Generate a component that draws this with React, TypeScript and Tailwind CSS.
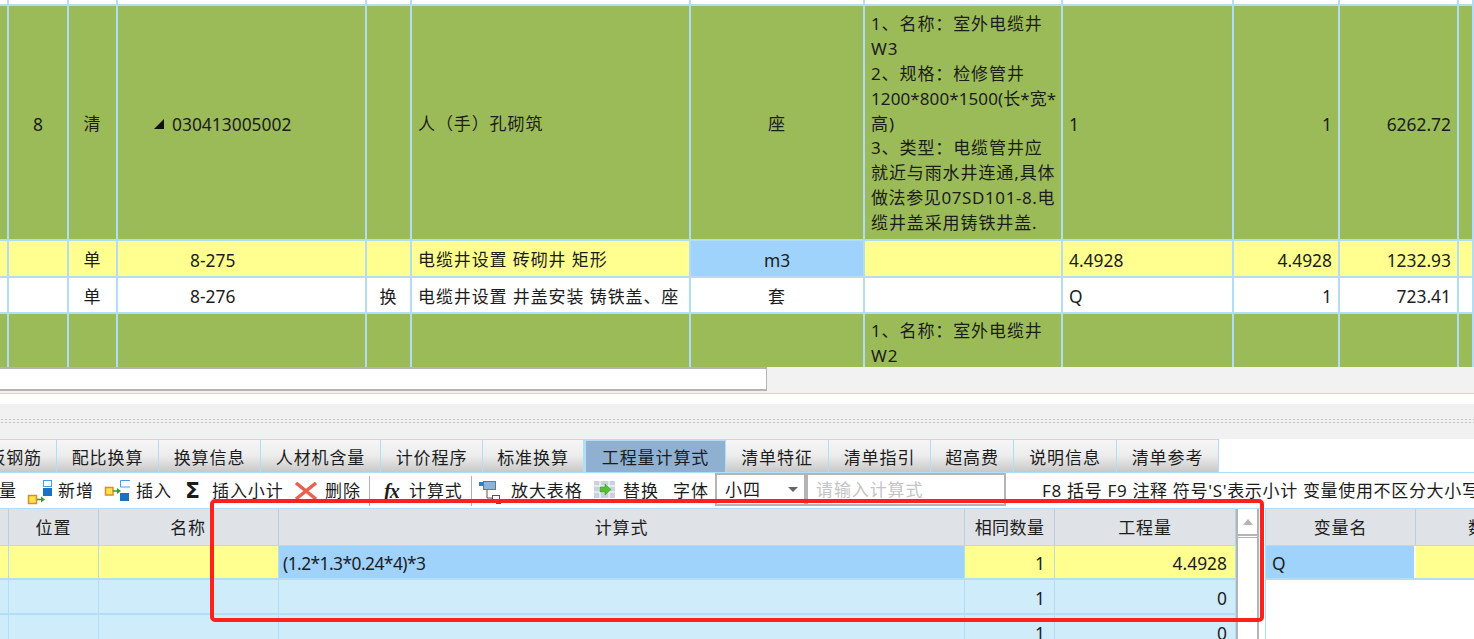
import type { ReactNode } from 'react'

const FONT = 'font-["Noto_Sans","Noto_Sans_CJK_SC",sans-serif]'

const cols = 'grid grid-cols-[9px_60px_49px_249px_45px_279px_174px_198px_171px_106px_119px_15px]'
const NUM = 'text-[17.4px] tracking-normal'

const aligns = [
  'justify-center', 'justify-center', 'justify-center', 'justify-start', 'justify-center', 'justify-start',
  'justify-center', 'justify-start', 'justify-start', 'justify-end', 'justify-end', 'justify-start',
]

type RowProps = { bg: string; h: string; cells: ReactNode[]; hilite?: number }

function Row({ bg, h, cells, hilite }: RowProps) {
  return (
    <div className={`${cols} ${bg} ${h} border-b-2 border-[#b5dcf5]`}>
      {cells.map((c, i) => (
        <div
          key={i}
          className={`flex items-center border-r-2 border-[#b5dcf5] min-w-0 pt-[3px] ${i === 0 ? '' : 'px-1.5'} ${aligns[i]} ${i === hilite ? 'bg-[#9fd3fb]' : ''}`}
        >
          {c}
        </div>
      ))}
    </div>
  )
}

const tabs = [
  { label: '钢筋', w: 'w-[57px]', left: true },
  { label: '配比换算', w: 'w-[102px]' },
  { label: '换算信息', w: 'w-[102px]' },
  { label: '人材机含量', w: 'w-[120px]' },
  { label: '计价程序', w: 'w-[102px]' },
  { label: '标准换算', w: 'w-[101px]' },
  { label: '工程量计算式', w: 'w-[142px]', active: true },
  { label: '清单特征', w: 'w-[103px]' },
  { label: '清单指引', w: 'w-[102px]' },
  { label: '超高费', w: 'w-[83px]' },
  { label: '说明信息', w: 'w-[103px]' },
  { label: '清单参考', w: 'w-[102px]' },
]

function NewIcon() {
  return (
    <svg width="26" height="30" viewBox="0 0 26 30">
      <rect x="2.500" y="19.500" width="8" height="8" fill="#fbe44a" stroke="#e08a2b" strokeWidth="1.500" />
      <path d="M11 23.500h6" stroke="#2f9e2f" strokeWidth="1.500" />
      <path d="M15 20.500l4 3-4 3z" fill="#2f9e2f" />
      <rect x="17.500" y="4.500" width="8" height="6" fill="#fff" stroke="#4a9be0" />
      <rect x="17" y="12" width="9" height="8" fill="#1b6fc4" />
    </svg>
  )
}

function InsertIcon() {
  return (
    <svg width="26" height="30" viewBox="0 0 26 30">
      <rect x="1.500" y="11.500" width="7.500" height="7.500" fill="#fbe44a" stroke="#e08a2b" strokeWidth="1.500" />
      <path d="M9 15h6" stroke="#2f9e2f" strokeWidth="1.500" />
      <path d="M13 12l4 3-4 3z" fill="#2f9e2f" />
      <path d="M26 4.500h-9.500v6.500h9.500" fill="#fff" stroke="#4a9be0" />
      <rect x="16" y="17" width="9" height="8" fill="#1b6fc4" />
    </svg>
  )
}

function CrossIcon() {
  return (
    <svg width="25" height="18" viewBox="0 0 25 18">
      <path d="M2 1l20 16M22 1L2 17" stroke="#e8624f" strokeWidth="3.500" />
    </svg>
  )
}

function ZoomTableIcon() {
  return (
    <svg width="33" height="30" viewBox="0 0 33 30">
      <rect x="7" y="6" width="5" height="4" fill="#2f7fc4" />
      <rect x="11.500" y="5.500" width="12" height="8" fill="#8db4d8" stroke="#4f7fa8" />
      <path d="M15 14v8h5" fill="none" stroke="#555" />
      <rect x="20.500" y="19.500" width="7" height="7" fill="#fff" stroke="#555" />
      <path d="M24 27.500h5" stroke="#555" />
    </svg>
  )
}

function ReplaceIcon() {
  return (
    <svg width="24" height="30" viewBox="0 0 24 30">
      <rect x="1" y="5" width="21" height="17" fill="#c9d3de" />
      <path d="M7 5v17M16 5v17M1 10h21M1 16h21" stroke="#fff" />
      <path d="M7 11h5V8l6 5.500-6 5.500v-3H7z" fill="#55c032" stroke="#2f8f1f" strokeWidth="0.500" />
    </svg>
  )
}

function Tool({ icon, box, label, w }: { icon: ReactNode; box: string; label: string; w: string }) {
  return (
    <div className={`flex items-center h-full shrink-0 ${w}`}>
      <span className={`flex items-center shrink-0 ${box}`}>{icon}</span>
      <span className="ml-1.5 pt-px whitespace-nowrap">{label}</span>
    </div>
  )
}

const tableCols = 'grid grid-cols-[9px_90px_180px_686px_90px_181px]'

export default function App() {
  return (
    <div className={`${FONT} relative w-[1474px] h-[639px] overflow-hidden bg-white text-[17px] tracking-[0.9px] text-[#1c1c1c]`}>
      {/* upper grid */}
      <div className={`${cols} h-[6px] border-b-2 border-[#b5dcf5]`}>
        {aligns.map((_, i) => (
          <div key={i} className="border-r-2 border-[#b5dcf5]" />
        ))}
      </div>
      <Row
        bg="bg-[#9bbb59]"
        h="h-[235px]"
        cells={[
          '', <span className={NUM}>8</span>, '清',
          <span className={`flex items-center ml-[30px] ${NUM}`}>
            <span className="w-0 h-0 mr-[8px] border-l-[10px] border-l-transparent border-b-[10px] border-b-[#111]" />
            030413005002
          </span>,
          '', '人（手）孔砌筑', '座',
          <div className="leading-[24.9px] -mr-1 whitespace-nowrap">
            1、名称：室外电缆井
            <br />W3
            <br />2、规格：检修管井
            <br /><span className="tracking-[0.1px]">1200*800*1500(长*宽*</span>
            <br />高)
            <br />3、类型：电缆管井应
            <br />就近与雨水井连通,具体
            <br /><span className="tracking-[0.6px]">做法参见07SD101-8.电</span>
            <br />缆井盖采用铸铁井盖.
          </div>,
          <span className={NUM}>1</span>, <span className={NUM}>1</span>, <span className={NUM}>6262.72</span>, '',
        ]}
      />
      <Row
        bg="bg-[#ffff8f]"
        h="h-[37px]"
        hilite={6}
        cells={[
          '', '', '单', <span className={`ml-[66px] ${NUM}`}>8-275</span>, '', '电缆井设置 砖砌井 矩形',
          <span className={NUM}>m3</span>, '', <span className={NUM}>4.4928</span>, <span className={NUM}>4.4928</span>, <span className={NUM}>1232.93</span>, '',
        ]}
      />
      <Row
        bg="bg-white"
        h="h-[36px]"
        cells={[
          '', '', '单', <span className={`ml-[66px] ${NUM}`}>8-276</span>, '换', '电缆井设置 井盖安装 铸铁盖、座', '套', '',
          <span className={NUM}>Q</span>, <span className={NUM}>1</span>, <span className={NUM}>723.41</span>, '',
        ]}
      />
      <div className={`${cols} bg-[#9bbb59] h-[53px] overflow-hidden`}>
        {aligns.map((a, i) => (
          <div key={i} className={`flex ${a} border-r-2 border-[#b5dcf5] min-w-0 ${i === 0 ? '' : 'px-1.5'}`}>
            {i === 7 && <div className="leading-[24.9px] -mr-1 pt-[5px]">1、名称：室外电缆井W2</div>}
          </div>
        ))}
      </div>

      {/* horizontal scrollbar */}
      <div className="h-[26px] bg-[#f2f2f2]">
        <div className="w-[767px] h-[24px] bg-white border-y-2 border-r border-[#b4b4b4]" />
      </div>
      <div className="h-px bg-[#b5dcf5]" />
      <div className="h-[10px] bg-white" />

      {/* splitter */}
      <div className="h-[35px] bg-[#f1f1f1] flex items-center">
        <div className="w-full h-[7px] bg-[radial-gradient(#c4c4c4_1px,transparent_1.2px)] bg-[length:4px_3px]" />
      </div>

      {/* tabs */}
      <div className="flex h-[34px] border-b border-[#b5dcf5] bg-white">
        {tabs.map((t) => (
          <div
            key={t.label}
            className={`${t.w} shrink-0 flex items-center justify-center pt-[3px] whitespace-nowrap overflow-hidden border-r border-t border-[#b5dcf5] ${
              t.active
                ? 'bg-[#8fb0d0] border-l-2 border-t-2'
                : 'bg-linear-to-b from-[#f6f6f6] via-[#ececec] to-[#c8c8c8]'
            } ${t.left ? 'justify-end! pr-[14px]' : ''}`}
          >
            {t.left ? '板钢筋' : t.label}
          </div>
        ))}
      </div>

      {/* toolbar */}
      <div className="flex items-center h-[36px] border-b border-[#b5dcf5] whitespace-nowrap overflow-hidden">
        <span className="w-[26px] shrink-0 -indent-px pt-px">量</span>
        <Tool icon={<NewIcon />} box="w-[26px]" label="新增" w="w-[78px]" />
        <Tool icon={<InsertIcon />} box="w-[26px]" label="插入" w="w-[80px]" />
        <Tool
          icon={<span className="font-['DejaVu_Sans'] font-bold text-[22px] ml-[1px] leading-none">Σ</span>}
          box="w-[22px]"
          label="插入小计"
          w="w-[110px]"
        />
        <Tool icon={<CrossIcon />} box="w-[25px]" label="删除" w="w-[75px]" />
        <div className="w-px h-[30px] bg-[#b0b0b0] shrink-0" />
        <Tool
          icon={<span className="font-['Liberation_Serif'] italic font-bold text-[20px] ml-[14px] leading-none tracking-[-1px]">fx</span>}
          box="w-[33px]"
          label="计算式"
          w="w-[101px]"
        />
        <div className="w-px h-[30px] bg-[#b0b0b0] shrink-0" />
        <Tool icon={<ZoomTableIcon />} box="w-[33px]" label="放大表格" w="w-[121px]" />
        <Tool icon={<ReplaceIcon />} box="w-[24px]" label="替换" w="w-[80px]" />
        <span className="w-[42px] shrink-0 pt-px">字体</span>
        <div className="w-[91px] h-[33px] shrink-0 border-2 border-[#b4b4b4] flex items-center justify-between pl-2 pr-[6px] -translate-y-px">
          小四
          <span className="w-0 h-0 border-x-[5px] border-x-transparent border-t-[5px] border-t-[#666]" />
        </div>
        <div className="w-[200px] h-[33px] shrink-0 border-2 border-[#b4b4b4] flex items-center pl-2 text-[#c4c4c4] -translate-y-px">
          请输入计算式
        </div>
        <span className="ml-[36px] shrink-0 pt-px tracking-[0.67px]">F8 括号 F9 注释 符号'S'表示小计 变量使用不区分大小写</span>
      </div>

      {/* bottom tables */}
      <div className="flex h-[130px] overflow-hidden">
        <div className="w-[1236px] shrink-0">
          <div className={`${tableCols} h-[37px] bg-[#dfe2e7] border-b border-[#b5dcf5]`}>
            {['', '位置', '名称', '计算式', '相同数量', '工程量'].map((h, i) => (
              <div key={i} className={`flex items-center justify-center pt-px border-r border-[#b9cfe2] ${i === 2 ? 'justify-end! pr-[72px]' : ''} ${i === 4 ? 'whitespace-nowrap tracking-[0.400px]' : ''}`}>{h}</div>
            ))}
          </div>
          <div className={`${tableCols} h-[34px] border-b-2 border-[#b5dcf5] ${NUM}`}>
            <div className="bg-[#ffff8f] border-r border-[#b5dcf5]" />
            <div className="bg-[#ffff8f] border-r border-[#b5dcf5]" />
            <div className="bg-[#ffff8f] border-r border-[#b5dcf5]" />
            <div className="bg-[#9fd3fb] flex items-center pt-[3px] pl-[4px] tracking-[-0.55px] border-r border-[#b5dcf5]">(1.2*1.3*0.24*4)*3</div>
            <div className="bg-[#ffff8f] flex items-center justify-end pt-[3px] pr-[9px] border-r border-[#b5dcf5]">1</div>
            <div className="bg-[#ffff8f] flex items-center justify-end pt-[3px] pr-[8px] border-r border-[#b5dcf5]">4.4928</div>
          </div>
          {[0, 1].map((r) => (
            <div key={r} className={`${tableCols} h-[35px] bg-[#ceecf9] border-b-2 border-[#b5dcf5] ${NUM}`}>
              <div className="border-r border-[#b5dcf5]" />
              <div className="border-r border-[#b5dcf5]" />
              <div className="border-r border-[#b5dcf5]" />
              <div className="border-r border-[#b5dcf5]" />
              <div className="flex items-center justify-end pt-[3px] pr-[9px] border-r border-[#b5dcf5]">1</div>
              <div className="flex items-center justify-end pt-[3px] pr-[8px] border-r border-[#b5dcf5]">0</div>
            </div>
          ))}
        </div>
        <div className="w-[23px] shrink-0 border-x-2 border-[#b4b4b4] flex flex-col">
          <div className="h-[27px] border-b-2 border-[#b4b4b4] flex items-center justify-center">
            <span className="w-0 h-0 border-x-[5px] border-x-transparent border-b-[6px] border-b-[#b4b4b4]" />
          </div>
          <div className="h-px bg-white mt-px border-b border-[#b4b4b4]" />
        </div>
        <div className="w-[7px] shrink-0 border-r border-[#b5dcf5]" />
        <div className="flex-1">
          <div className="grid grid-cols-[150px_1fr] h-[37px] bg-[#dfe2e7] border-b border-[#b5dcf5]">
            <div className="flex items-center justify-center pt-px border-r border-[#b9cfe2]">变量名</div>
            <div className="flex items-center pl-[52px] pt-px">数</div>
          </div>
          <div className={`grid grid-cols-[150px_1fr] h-[34px] border-b-2 border-[#b5dcf5] ${NUM}`}>
            <div className="bg-[#9fd3fb] flex items-center pt-[3px] pl-1.5 border-r-2 border-white">Q</div>
            <div className="bg-[#ffff8f]" />
          </div>
        </div>
      </div>

      {/* red annotation box */}
      <div className="absolute left-[210px] top-[499px] w-[1054px] h-[123px] border-[4px] border-[#fc2219] rounded-[5px]" />
    </div>
  )
}
